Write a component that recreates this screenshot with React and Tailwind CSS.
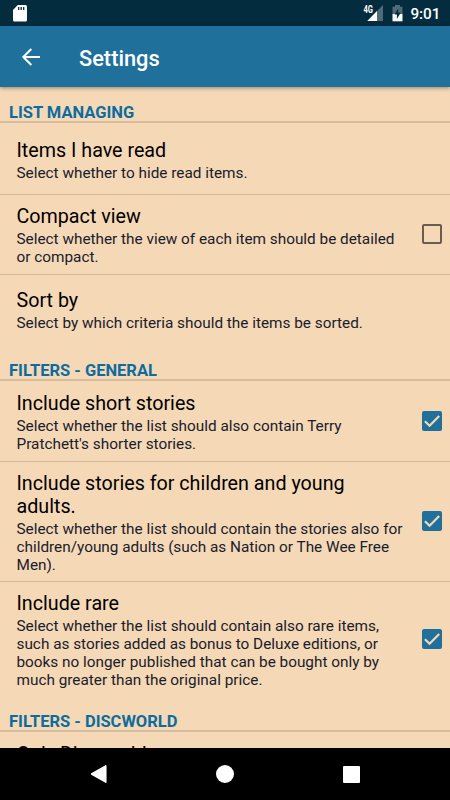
import React, { useState } from "react";

const SECTIONS = [
  {
    title: "List managing",
    headerClass: "h-[35.5px]",
    items: [
      { id: "read", title: "Items I have read", summary: "Select whether to hide read items.", rowClass: "h-[72px] pt-px" },
      { id: "compact", title: "Compact view", summary: "Select whether the view of each item should be detailed or compact.", checkable: true, rowClass: "h-[80px]" },
      { id: "sort", title: "Sort by", summary: "Select by which criteria should the items be sorted.", rowClass: "h-[70px] pb-[2px]" },
    ],
  },
  {
    title: "Filters - General",
    headerClass: "h-[36px]",
    items: [
      { id: "short", title: "Include short stories", summary: "Select whether the list should also contain Terry Pratchett's shorter stories.", checkable: true, rowClass: "h-[81px]" },
      { id: "children", title: "Include stories for children and young adults.", summary: "Select whether the list should contain the stories also for children/young adults (such as Nation or The Wee Free Men).", checkable: true, rowClass: "h-[120px]" },
      { id: "rare", title: "Include rare", summary: "Select whether the list should contain also rare items, such as stories added as bonus to Deluxe editions, or books no longer published that can be bought only by much greater than the original price.", checkable: true, rowClass: "h-[115px]" },
    ],
  },
  {
    title: "Filters - Discworld",
    headerClass: "h-[35.5px]",
    items: [
      { id: "discworld", title: "Only Discworld", summary: "Select whether the list should contain only Discworld items.", rowClass: "h-[80px]" },
    ],
  },
];

function StatusBar() {
  return (
    <div className="flex h-[26px] shrink-0 items-center bg-[#042c3f] pl-[13px] pr-[9.5px] text-white">
      <svg width="14" height="17" viewBox="0 0 14 17">
        <path d="M4.8 0H12.5Q14 0 14 1.5V15Q14 16.5 12.5 16.5H1.5Q0 16.5 0 15V5Z" fill="#fff" />
        <path d="M5.7 2V5M8.2 2V5M10.7 2V5" stroke="#042c3f" strokeWidth="1.3" />
      </svg>
      <svg className="ml-auto" width="20" height="18" viewBox="0 0 20 18">
        <path d="M20 1V17H4.3Z" fill="#4f6b79" />
        <path d="M14 7V17H4.3Z" fill="#fff" />
        <text x="0.5" y="8.5" fontSize="10" fontWeight="700" fill="#fff" textLength="9.5" lengthAdjust="spacingAndGlyphs">4G</text>
      </svg>
      <svg className="ml-[9.5px]" width="11" height="17" viewBox="0 0 11 17">
        <path d="M3 0H8V1.7H10.5V9H.5V1.7H3Z" fill="#4f6b79" />
        <path d="M.5 9H10.5V16.3H.5Z" fill="#fff" />
        <path d="M6.3 3.5L2.5 9.6H4.9V14L8.7 7.7H6.3Z" fill="#042c3f" />
      </svg>
      <span className="ml-[7px] mt-[3px] text-[15.3px] leading-none font-medium">9:01</span>
    </div>
  );
}

function Toolbar() {
  return (
    <div className="z-10 flex h-[61px] shrink-0 items-center bg-[#20709c] pl-[21px] text-white shadow-[0_1px_4px_rgba(0,0,0,0.4)]">
      <svg width="20" height="18" viewBox="0 0 20 18" fill="none" stroke="#fff" strokeWidth="2">
        <path d="M19 9H2.5M10.3 1L2.3 9L10.3 17" />
      </svg>
      <h1 className="ml-[38px] mt-[4px] text-[21.8px] leading-none font-medium">Settings</h1>
    </div>
  );
}

function Checkbox({ checked }) {
  if (!checked) {
    return <span className="block size-[20px] rounded-[2px] border-2 border-[#695d50]" />;
  }
  return (
    <span className="block size-[20px] rounded-[2px] bg-[#20709c]">
      <svg width="20" height="20" viewBox="0 0 20 20" fill="none" stroke="#f5d8b6" strokeWidth="2.2">
        <path d="M2.9 10.2L7.6 14.8L17.2 5.1" />
      </svg>
    </span>
  );
}

function PreferenceRow({ item, checked, onToggle, last }) {
  return (
    <div
      onClick={item.checkable ? onToggle : undefined}
      className={`flex shrink-0 items-center pl-[16.5px] pr-[8px] ${item.rowClass} ${last ? "" : "border-b border-[#d2b99c]"}`}
    >
      <div className="w-[390px] pt-[4.5px]">
        <p className="text-[19.7px] leading-[23px] text-black">{item.title}</p>
        <p className="mt-[3px] text-[15.34px] leading-[17.9px] text-[#18202c]">{item.summary}</p>
      </div>
      {item.checkable && (
        <div className="ml-auto">
          <Checkbox checked={checked} />
        </div>
      )}
    </div>
  );
}

function NavBar() {
  return (
    <div className="z-10 flex h-[52px] shrink-0 items-center justify-around bg-black pl-[34px] pr-[36px]">
      <svg width="18" height="20" viewBox="0 0 18 20">
        <path d="M2.6 10L16.8 1.8V18.2Z" fill="#fff" stroke="#fff" strokeWidth="1.5" strokeLinejoin="round" />
      </svg>
      <span className="size-[18px] rounded-full bg-white" />
      <span className="size-[17px] rounded-[1px] bg-white" />
    </div>
  );
}

export default function App() {
  const [values, setValues] = useState({ compact: false, short: true, children: true, rare: true });

  const toggle = (id) => setValues(v => ({ ...v, [id]: !v[id] }));

  return (
    <div className="flex h-[800px] w-[450px] flex-col overflow-hidden bg-[#f5d8b6] font-['Roboto',sans-serif]">
      <StatusBar />
      <Toolbar />
      <div className="flex min-h-0 flex-1 flex-col overflow-hidden">
        {SECTIONS.map(section => (
          <section key={section.title} className="shrink-0">
            <h2 className={`flex items-end border-b-2 border-[#d6bb9d] pl-[9px] text-[16.5px] leading-[17px] font-bold text-[#0d6c9f] uppercase ${section.headerClass}`}>
              {section.title}
            </h2>
            {section.items.map((item, i) => (
              <PreferenceRow
                key={item.id}
                item={item}
                checked={values[item.id]}
                onToggle={() => toggle(item.id)}
                last={i === section.items.length - 1}
              />
            ))}
          </section>
        ))}
      </div>
      <NavBar />
    </div>
  );
}
